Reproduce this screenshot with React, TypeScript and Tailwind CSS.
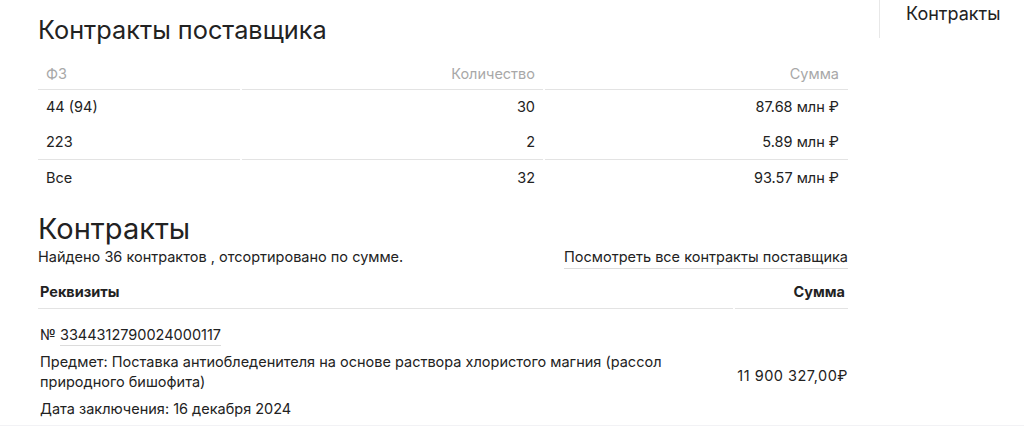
import React from 'react'

const font = { fontFamily: 'Inter, "Noto Sans", sans-serif' }

const summary = [
  { fz: '44 (94)', count: '30', sum: '87.68 млн ₽' },
  { fz: '223', count: '2', sum: '5.89 млн ₽' },
]

function SummaryTable() {
  return (
    <div className="grid grid-cols-[202px_301px_1fr] gap-x-[2px] text-[14.5px] text-[#222]">
      {/* header */}
      <div className="h-[32px] pl-2 flex items-center border-b border-[#e3e3e3] text-[#a8a8a8]">ФЗ</div>
      <div className="h-[32px] pr-2 flex items-center justify-end border-b border-[#e3e3e3] text-[#a8a8a8]">Количество</div>
      <div className="h-[32px] pr-[9px] flex items-center justify-end border-b border-[#e3e3e3] text-[#a8a8a8]">Сумма</div>

      {summary.map((r, i) => {
        const last = i === summary.length - 1
        const b = last ? 'border-b border-[#e3e3e3]' : 'border-b border-transparent'
        return (
          <React.Fragment key={r.fz}>
            <div className={`h-[35px] pl-2 flex items-center ${b}`}>{r.fz}</div>
            <div className={`h-[35px] pr-2 flex items-center justify-end ${b}`}>{r.count}</div>
            <div className={`h-[35px] pr-[9px] flex items-center justify-end ${b}`}>{r.sum}</div>
          </React.Fragment>
        )
      })}

      <div className="h-[35px] pl-2 flex items-center">Все</div>
      <div className="h-[35px] pr-2 flex items-center justify-end">32</div>
      <div className="h-[35px] pr-[9px] flex items-center justify-end">93.57 млн ₽</div>
    </div>
  )
}

function ContractsTable() {
  return (
    <div className="text-[14.5px] text-[#222]">
      {/* Header */}
      <div className="grid grid-cols-[1fr_113px] gap-x-[2px] font-bold">
        <div className="h-[33px] pl-[2px] flex items-center border-b border-[#e3e3e3]">Реквизиты</div>
        <div className="h-[33px] pr-[3px] flex items-center justify-end border-b border-[#e3e3e3]">Сумма</div>
      </div>

      {/* Row */}
      <div className="grid grid-cols-[1fr_113px] gap-x-[2px]">
        <div className="pt-[16px] pb-[6px] pl-[2px]">
          <div className="leading-5">
            № <span className="border-b border-[#dcdcdc] pb-[2px]">3344312790024000117</span>
          </div>
          <div className="mt-[7px] leading-5">
            Предмет: Поставка антиобледенителя на основе раствора хлористого магния (рассол природного бишофита)
          </div>
          <div className="mt-[7px] leading-5">Дата заключения: 16 декабря 2024</div>
        </div>
        <div className="pt-[57px] flex justify-end leading-5 tracking-[0.5px] whitespace-nowrap">11 900 327,00₽</div>
      </div>
    </div>
  )
}

export default function App() {
  return (
    <div className="w-[1024px] h-[426px] overflow-hidden bg-white flex flex-col" style={font}>
      <div className="flex flex-1">
        {/* Main */}
        <div className="w-[848px] pl-[38px] shrink-0">
          <h1 className="text-[25.3px] leading-[30px] pt-[15px] text-[#222] font-normal">Контракты поставщика</h1>
          <div className="mt-[13px]">
            <SummaryTable />
          </div>

          <h2 className="mt-[16px] text-[29px] leading-[36px] text-[#222] font-normal">Контракты</h2>
          <div className="flex justify-between items-start text-[14.5px] text-[#222]">
            <span className="leading-5">Найдено 36 контрактов , отсортировано по сумме.</span>
            <a className="leading-5 border-b border-[#dcdcdc] pb-[1px]">Посмотреть все контракты поставщика</a>
          </div>
          <div className="mt-[7px]">
            <ContractsTable />
          </div>
        </div>

        {/* Sidebar */}
        <div className="ml-[31px] self-start border-l border-[#e8e8e8] h-[38px] pl-[26px] pt-[2px]">
          <span className="text-[18px] leading-6 text-[#222]">Контракты</span>
        </div>
      </div>
      <div className="h-[4px] bg-[#f2f2f5]" />
    </div>
  )
}
